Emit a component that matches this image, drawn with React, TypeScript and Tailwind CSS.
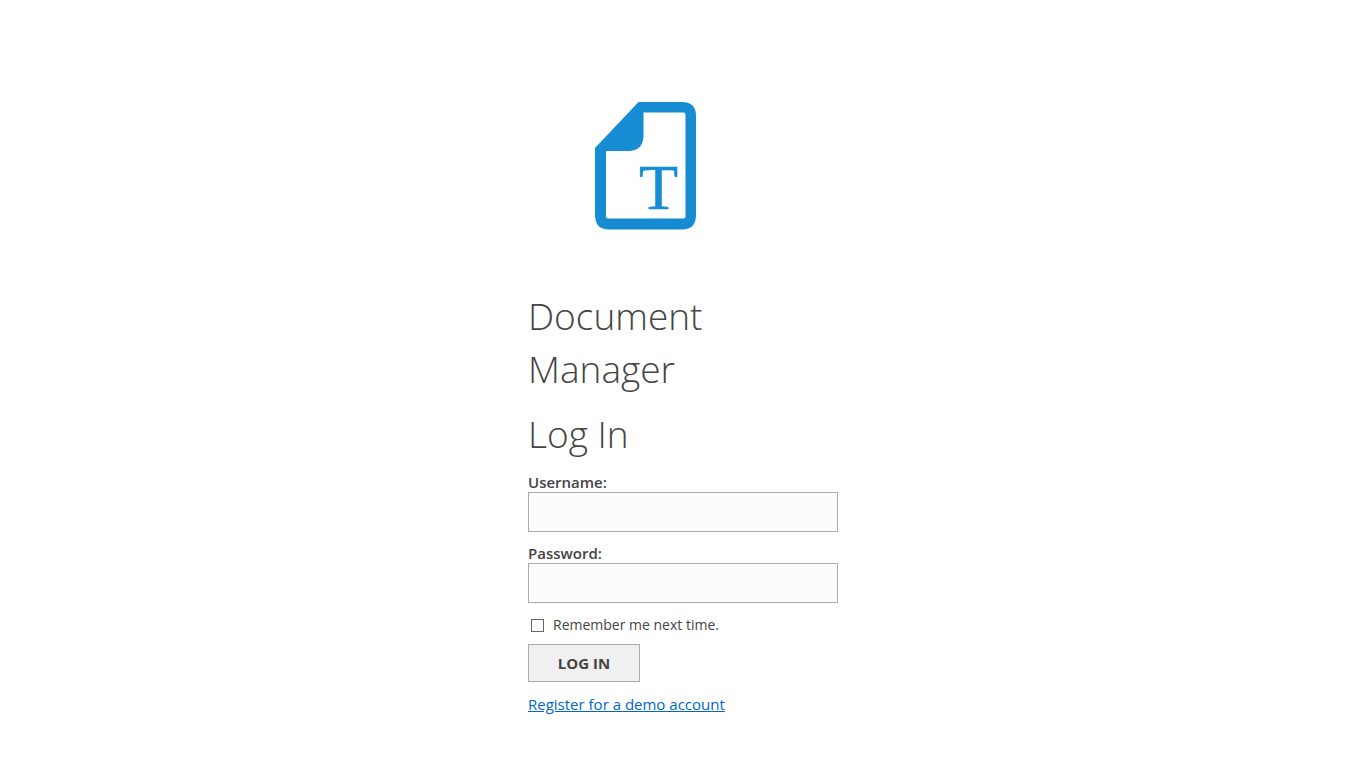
import { useState } from "react";

function Logo() {
  return (
    <svg viewBox="0 0 101 128" className="h-32 w-[101px]" role="img" aria-label="Document Manager">
      <path
        fill="#168dd3"
        fillRule="evenodd"
        d="M43.500 0H87Q101 0 101 14V113Q101 127.500 87 127.500H14Q0 127.500 0 113V46ZM48.500 10.500V33Q48.500 49 33 49H11V114.500Q11 116.500 13 116.500H88.500Q90.500 116.500 90.500 114.500V12.500Q90.500 10.500 88.500 10.500Z"
      />
      <text
        x="63.500"
        y="107"
        textAnchor="middle"
        fill="#168dd3"
        stroke="#168dd3"
        strokeWidth="0.5"
        className="font-['Liberation_Serif',serif] text-[64px]"
      >
        T
      </text>
    </svg>
  );
}

type FieldProps = {
  id: string;
  label: string;
  type: string;
  value: string;
  onChange: (value: string) => void;
};

function Field({ id, label, type, value, onChange }: FieldProps) {
  return (
    <div className="flex flex-col">
      <label htmlFor={id} className="text-[15px] leading-5 font-semibold">
        {label}
      </label>
      <input
        id={id}
        type={type}
        value={value}
        onChange={(e) => onChange(e.target.value)}
        className="h-10 w-full border border-[#ababab] bg-[#fcfcfc] px-2 text-[15px] outline-none focus:border-[#168dd3]"
      />
    </div>
  );
}

export default function App() {
  const [username, setUsername] = useState("");
  const [password, setPassword] = useState("");
  const [remember, setRemember] = useState(false);

  return (
    <main className="flex min-h-screen flex-col items-center bg-white px-4 pt-[102px] pb-12 font-['Open_Sans','Noto_Sans',sans-serif] text-[#444]">
      <div className="w-full max-w-[310px]">
        <div className="pl-[67px]">
          <Logo />
        </div>
        <h1 className="mt-[59px] w-60 text-[37px] leading-[53px] font-light">Document Manager</h1>
        <form onSubmit={(e) => e.preventDefault()}>
          <h2 className="mt-3 text-[37px] leading-[53px] font-light">Log In</h2>
          <div className="mt-3 flex flex-col gap-[11px]">
            <Field id="username" label="Username:" type="text" value={username} onChange={setUsername} />
            <Field id="password" label="Password:" type="password" value={password} onChange={setPassword} />
          </div>
          <div className="mt-3 flex items-center gap-[9px] pl-[3px]">
            <input
              id="remember"
              type="checkbox"
              checked={remember}
              onChange={(e) => setRemember(e.target.checked)}
              className="size-[13px] appearance-none border border-[#666] bg-white checked:bg-[#168dd3]"
            />
            <label htmlFor="remember" className="text-sm leading-5">
              Remember me next time.
            </label>
          </div>
          <button
            type="submit"
            className="mt-[9px] block h-[38px] w-28 border border-[#ababab] bg-[#f0f0f0] text-[15px] font-bold"
          >
            LOG IN
          </button>
        </form>
        <a href="#register" className="mt-3 inline-block text-[15px] leading-5 text-[#0066cc] underline">
          Register for a demo account
        </a>
      </div>
    </main>
  );
}
